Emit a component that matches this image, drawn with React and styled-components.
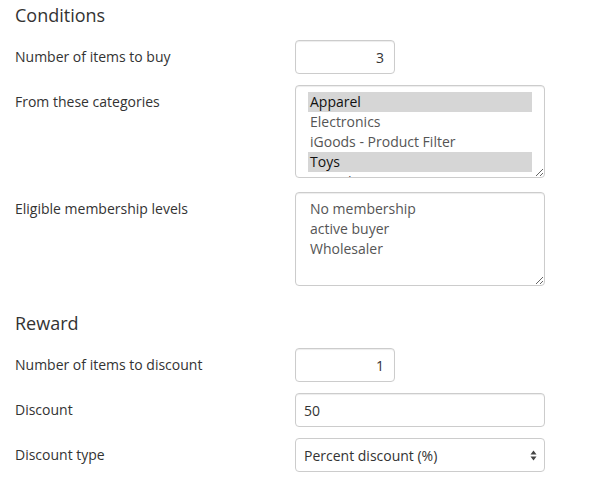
import React from "react";
import styled, { createGlobalStyle } from "styled-components";

const GlobalStyle = createGlobalStyle`
  body {
    margin: 0;
    background: #ffffff;
    font-family: "Open Sans", "Liberation Sans", sans-serif;
    color: #333333;
  }
`;

const Page = styled.div`
  width: 591px;
  padding: 5px 15px 0;
  box-sizing: border-box;
`;

const Heading = styled.h3`
  margin: ${(p) => p.$top || 0}px 0 15px;
  font-size: 18px;
  font-weight: 400;
  line-height: 20px;
  color: #333333;
`;

const Row = styled.div`
  display: grid;
  grid-template-columns: 280px 250px;
  margin-bottom: ${(p) => (p.$gap !== undefined ? p.$gap : 11)}px;
`;

const Label = styled.label`
  padding-top: 7px;
  font-size: 14px;
  line-height: 20px;
  color: #333333;
`;

const Input = styled.input`
  width: ${(p) => (p.$small ? "100px" : "250px")};
  height: 34px;
  box-sizing: border-box;
  padding: 0 10px 0 8px;
  border: 1px solid #cccccc;
  border-radius: 4px;
  box-shadow: inset 0 1px 1px rgba(0, 0, 0, 0.075);
  font-family: inherit;
  font-size: 14px;
  color: #333333;
  text-align: ${(p) => (p.$small ? "right" : "left")};
  outline: none;
`;

const ListBox = styled.div`
  width: 250px;
  height: ${(p) => p.$height}px;
  box-sizing: border-box;
  padding: 6px 12px 0;
  border: 1px solid #cccccc;
  border-radius: 4px;
  box-shadow: inset 0 1px 1px rgba(0, 0, 0, 0.075);
  overflow: hidden;
  resize: vertical;
`;

const Option = styled.div`
  height: 20px;
  padding-left: ${(p) => (p.$indent ? 17 : 2)}px;
  font-size: 14px;
  line-height: 20px;
  white-space: nowrap;
  color: ${(p) => (p.$selected ? "#111111" : "#555555")};
  background: ${(p) => (p.$selected ? "#d6d6d6" : "transparent")};
`;

const SelectWrap = styled.div`
  position: relative;
  width: 250px;
`;

const Select = styled.select`
  width: 250px;
  height: 34px;
  box-sizing: border-box;
  padding: 0 24px 0 8px;
  border: 1px solid #cccccc;
  border-radius: 4px;
  background: #ffffff;
  font-family: inherit;
  font-size: 14px;
  color: #333333;
  appearance: none;
  outline: none;
`;

const Arrows = styled.svg`
  position: absolute;
  right: 8px;
  top: 12px;
  pointer-events: none;
`;

const categories = [
  { name: "Apparel", selected: true },
  { name: "Electronics" },
  { name: "iGoods - Product Filter" },
  { name: "Toys", selected: true },
  { name: "Gadgets", indent: true },
];

const memberships = ["No membership", "active buyer", "Wholesaler"];

export default function App() {
  return (
    <Page>
      <GlobalStyle />
      <Heading>Conditions</Heading>
      <Row>
        <Label>Number of items to buy</Label>
        <Input $small defaultValue="3" />
      </Row>
      <Row $gap={14}>
        <Label>From these categories</Label>
        <ListBox $height={93}>
          {categories.map((c) => (
            <Option key={c.name} $selected={c.selected} $indent={c.indent}>
              {c.name}
            </Option>
          ))}
        </ListBox>
      </Row>
      <Row $gap={0}>
        <Label>Eligible membership levels</Label>
        <ListBox $height={94}>
          {memberships.map((m) => (
            <Option key={m}>{m}</Option>
          ))}
        </ListBox>
      </Row>
      <Heading $top={27}>Reward</Heading>
      <Row>
        <Label>Number of items to discount</Label>
        <Input $small defaultValue="1" />
      </Row>
      <Row>
        <Label>Discount</Label>
        <Input defaultValue="50" />
      </Row>
      <Row>
        <Label>Discount type</Label>
        <SelectWrap>
          <Select defaultValue="percent">
            <option value="percent">Percent discount (%)</option>
            <option value="fixed">Fixed amount</option>
          </Select>
          <Arrows width="7" height="11" viewBox="0 0 7 11">
            <path d="M3.5 0.5 L6.5 4.5 L0.5 4.5 Z" fill="#444" />
            <path d="M3.5 10.5 L6.5 6.5 L0.5 6.5 Z" fill="#444" />
          </Arrows>
        </SelectWrap>
      </Row>
    </Page>
  );
}
